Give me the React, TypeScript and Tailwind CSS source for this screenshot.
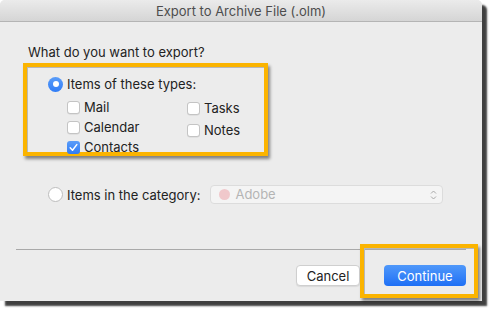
import React from "react";

const font = { fontFamily: 'Inter, "Liberation Sans", Arial, sans-serif' };

function Check({ checked, label }: { checked?: boolean; label: string }) {
  return (
    <div className="flex items-center h-[20px]">
      {checked ? (
        <div className="w-[13px] h-[13px] rounded-[3px] bg-gradient-to-b from-[#5a9cf8] to-[#2f7cf6] flex items-center justify-center">
          <svg width="9" height="9" viewBox="0 0 9 9">
            <path d="M1.2 4.8 L3.5 7.2 L7.8 1.6" stroke="white" strokeWidth="1.5" fill="none" strokeLinecap="round" strokeLinejoin="round" />
          </svg>
        </div>
      ) : (
        <div className="w-[13px] h-[13px] rounded-[3px] bg-white border border-[#c4c4c4] shadow-[0_0.5px_0.5px_rgba(0,0,0,0.1)]" />
      )}
      <span className="ml-[4px] text-[13px] leading-[16px] text-[#222]">{label}</span>
    </div>
  );
}

function Radio({ on, label }: { on?: boolean; label: string }) {
  return (
    <div className="flex items-center">
      {on ? (
        <div className="w-[15px] h-[15px] rounded-full bg-gradient-to-b from-[#5a9cf8] to-[#2f7cf6] flex items-center justify-center">
          <div className="w-[6px] h-[6px] rounded-full bg-white" />
        </div>
      ) : (
        <div className="w-[15px] h-[15px] rounded-full bg-white border border-[#bdbdbd]" />
      )}
      <span className="ml-[4px] text-[13px] leading-[16px] text-[#222]">{label}</span>
    </div>
  );
}

export default function App() {
  return (
    <div className="w-[492px] h-[312px] bg-white" style={font}>
      <div className="w-[482px] h-[301px] bg-[#ececec] rounded-t-[5px] flex flex-col shadow-[5px_5px_2px_rgba(0,0,0,0.75)]">
        {/* Title bar */}
        <div className="h-[22px] rounded-t-[5px] bg-gradient-to-b from-[#ebebeb] to-[#d5d5d5] border-b border-[#b4b4b4] flex items-center justify-center">
          <span className="text-[13px] leading-[16px] text-[#4d4d4d]">Export to Archive File (.olm)</span>
        </div>

        <div className="pl-[28px] pt-[22px] text-[13px] leading-[16px] text-[#222]">What do you want to export?</div>

        {/* Types group */}
        <div className="ml-[23px] mt-[3px] w-[245px] h-[93px] border-4 border-[#fbb400] shadow-[2px_3px_3px_rgba(0,0,0,0.45),inset_1px_1px_0_#b8b8b8] pl-[21px] pt-[9px]">
          <Radio on label="Items of these types:" />
          <div className="flex mt-[5px] ml-[19px]">
            <div className="w-[120px] flex flex-col">
              <Check label="Mail" />
              <Check label="Calendar" />
              <Check checked label="Contacts" />
            </div>
            <div className="flex flex-col pt-[1px] gap-[2px]">
              <Check label="Tasks" />
              <Check label="Notes" />
            </div>
          </div>
        </div>

        {/* Category row */}
        <div className="flex items-center mt-[29px] ml-[48px]">
          <Radio label="Items in the category:" />
          <div className="ml-[10px] w-[233px] h-[19px] rounded-[4px] bg-[#f4f4f4] border border-[#dcdcdc] flex items-center pl-[8px] pr-[5px]">
            <div className="w-[11px] h-[11px] rounded-full bg-[#f0c8cb]" />
            <span className="ml-[5px] text-[13px] text-[#b4b4b4]">Adobe</span>
            <svg className="ml-auto" width="7" height="12" viewBox="0 0 7 12">
              <path d="M1 4.5 L3.5 2 L6 4.5 M1 7.5 L3.5 10 L6 7.5" stroke="#a8a8a8" strokeWidth="1" fill="none" />
            </svg>
          </div>
        </div>

        <div className="mt-[45px] ml-[16px] mr-[16px] h-px bg-[#a9a9a9]" />

        {/* Buttons */}
        <div className="flex justify-end items-start mt-[-6px] pr-[4px]">
          <button className="mt-[21px] w-[64px] h-[21px] rounded-[4px] bg-white border border-[#cfcfcf] shadow-[0_1px_1px_rgba(0,0,0,0.08)] text-[13px] leading-[16px] text-[#222]">
            Cancel
          </button>
          <div className="flex items-start w-[118px] h-[54px] border-4 border-[#fbb400] shadow-[2px_3px_3px_rgba(0,0,0,0.45),inset_1px_1px_0_#b8b8b8] pl-[20px] pt-[17px]">
            <button className="w-[82px] h-[21px] rounded-[4px] bg-gradient-to-b from-[#4f98fa] to-[#1e6ff5] text-[13px] leading-[16px] text-white">
              Continue
            </button>
          </div>
        </div>
      </div>
    </div>
  );
}
